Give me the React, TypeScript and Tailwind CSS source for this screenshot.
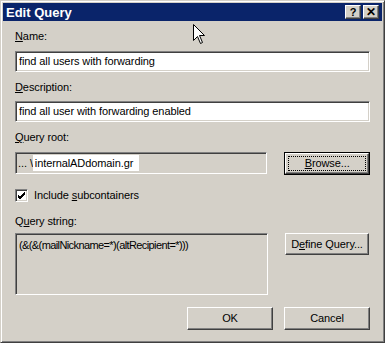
import React from "react";

const font = { fontFamily: '"Liberation Sans", Arial, sans-serif' };

function Sunken({ className = "", children }: { className?: string; children?: React.ReactNode }) {
  return (
    <div
      className={`border border-t-[#808080] border-l-[#808080] border-b-white border-r-white shadow-[inset_1px_1px_0_#404040,inset_-1px_-1px_0_#d4d0c8] ${className}`}
    >
      {children}
    </div>
  );
}

function Btn({ children, className = "", focused = false }: { children: React.ReactNode; className?: string; focused?: boolean }) {
  if (focused) {
    return (
      <div className={`border border-black ${className}`}>
        <div className="h-full w-full border border-t-white border-l-white border-b-[#404040] border-r-[#404040] shadow-[inset_-1px_-1px_0_#808080] flex items-center justify-center p-[2px]">
          <div className="h-full w-full border border-dotted border-black flex items-center justify-center">
            {children}
          </div>
        </div>
      </div>
    );
  }
  return (
    <div
      className={`border border-t-white border-l-white border-b-[#404040] border-r-[#404040] shadow-[inset_-1px_-1px_0_#808080] flex items-center justify-center ${className}`}
    >
      {children}
    </div>
  );
}

export default function App() {
  return (
    <div className="w-[391px] h-[351px] bg-white relative overflow-hidden text-[11px] tracking-[-0.1px] text-black" style={font}>
      <div className="w-[385px] h-[343px] bg-[#d4d0c8] border border-t-[#d4d0c8] border-l-[#d4d0c8] border-b-[#404040] border-r-[#404040] shadow-[inset_1px_1px_0_#ffffff,inset_-1px_-1px_0_#808080] p-[2px] flex flex-col">
        {/* title bar */}
        <div className="h-[18px] bg-[#0a246a] flex items-center justify-between pl-[3px] pr-[3px]">
          <span className="text-white font-bold text-[13px] tracking-normal leading-none">Edit Query</span>
          <div className="flex gap-[2px]">
            <Btn className="w-[16px] h-[14px] bg-[#d4d0c8] text-[11px] font-bold leading-none">?</Btn>
            <Btn className="w-[16px] h-[14px] bg-[#d4d0c8] text-[12px] font-bold leading-none">✕</Btn>
          </div>
        </div>

        <div className="pl-[12px] pr-[12px] flex flex-col">
          {/* Name */}
          <div className="mt-[8px] h-[14px] leading-[14px]">
            <span className="underline">N</span>ame:
          </div>
          <Sunken className="mt-[8px] h-[21px] w-[355px] bg-white flex items-center pl-[3px]">
            find all users with forwarding
          </Sunken>

          {/* Description */}
          <div className="mt-[8px] h-[14px] leading-[14px]">
            <span className="underline">D</span>escription:
          </div>
          <Sunken className="mt-[7px] h-[21px] w-[355px] bg-white flex items-center pl-[3px]">
            find all user with forwarding enabled
          </Sunken>

          {/* Query root */}
          <div className="mt-[8px] h-[14px] leading-[14px]">
            <span className="underline">Q</span>uery root:
          </div>
          <div className="mt-[8px] flex items-start">
            <Sunken className="h-[22px] w-[253px] bg-[#d4d0c8] flex items-center pl-[2px]">
              <span className="leading-none">...</span>
              <span className="ml-[3px] leading-none">\</span>
              <span className="bg-white h-[16px] px-[2px] flex items-center w-[106px] text-black">internalADdomain.gr</span>
            </Sunken>
            <Btn focused className="ml-[17px] w-[86px] h-[23px]">
              <span><span className="underline">B</span>rowse...</span>
            </Btn>
          </div>

          {/* checkbox */}
          <div className="mt-[14px] flex items-center">
            <Sunken className="w-[13px] h-[13px] bg-white flex items-center justify-center">
              <svg width="9" height="9" viewBox="0 0 9 9">
                <path d="M1 4 L3 6 L8 1 M1 5 L3 7 L8 2 M1 6 L3 8 L8 3" stroke="black" strokeWidth="1" fill="none" />
              </svg>
            </Sunken>
            <span className="ml-[6px] leading-none">
              Include <span className="underline">s</span>ubcontainers
            </span>
          </div>

          {/* Query string */}
          <div className="mt-[12px] h-[14px] leading-[14px]">
            Q<span className="underline">u</span>ery string:
          </div>
          <div className="mt-[5px] flex items-start">
            <Sunken className="h-[62px] w-[253px] bg-[#d4d0c8] pl-[3px] pt-[3px]">
              <span className="leading-[14px] tracking-[-0.6px]">(&amp;(&amp;(mailNickname=*)(altRecipient=*)))</span>
            </Sunken>
            <Btn className="ml-[17px] w-[84px] h-[22px]">
              <span>D<span className="underline">e</span>fine Query...</span>
            </Btn>
          </div>

          {/* OK Cancel */}
          <div className="mt-[12px] flex justify-end gap-[11px]">
            <Btn className="w-[86px] h-[23px]">OK</Btn>
            <Btn className="w-[86px] h-[23px]">Cancel</Btn>
          </div>
        </div>
      </div>

      {/* mouse cursor */}
      <svg className="absolute left-[193px] top-[24px]" width="13" height="21" viewBox="0 0 13 21">
        <polygon points="0.5,0.5 0.5,16.5 4.5,12.5 7.5,19.5 9.5,18.5 6.5,11.5 11.5,11.5" fill="white" stroke="black" strokeWidth="1" />
      </svg>
    </div>
  );
}
